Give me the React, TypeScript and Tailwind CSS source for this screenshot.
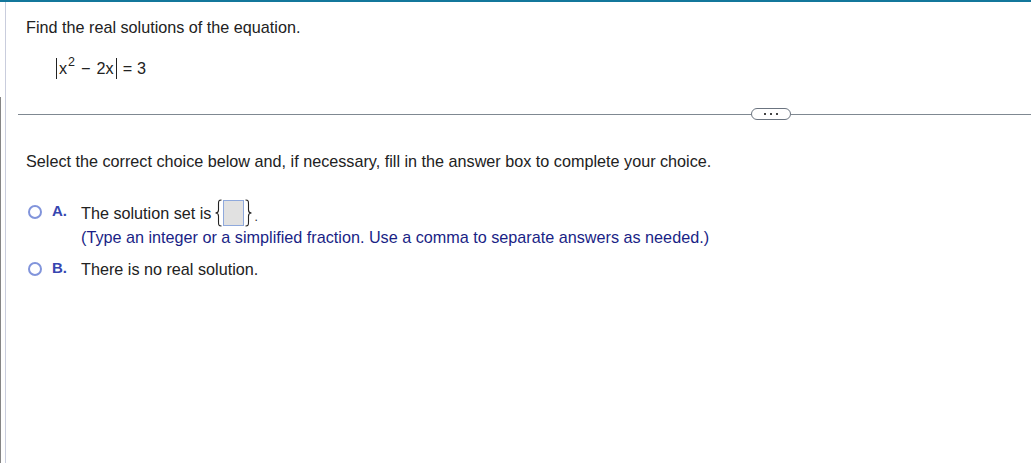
import React from 'react';

const Radio: React.FC = () => (
    <span className="block shrink-0 w-[14px] h-[14px] rounded-full border-2 border-[#8194db] bg-white"/>
);

const Brace: React.FC<{ side: 'l' | 'r' }> = ({side}) => (
    <svg width="9" height="28" viewBox="0 0 9 28" className="shrink-0">
        {side === 'l' ? (
            <path d="M7.5 1 C4.5 1 4.5 2.5 4.5 5 L4.5 11 C4.5 13 3.5 14 1.5 14 C3.5 14 4.5 15 4.5 17 L4.5 23 C4.5 25.5 4.5 27 7.5 27"
                  fill="none" stroke="#222" strokeWidth="1.1"/>
        ) : (
            <path d="M1.5 1 C4.5 1 4.5 2.5 4.5 5 L4.5 11 C4.5 13 5.5 14 7.5 14 C5.5 14 4.5 15 4.5 17 L4.5 23 C4.5 25.5 4.5 27 1.5 27"
                  fill="none" stroke="#222" strokeWidth="1.1"/>
        )}
    </svg>
);

const App: React.FC = () => {
    return (
        <div className="w-[1031px] h-[463px] bg-white flex flex-col overflow-hidden text-[#222]"
             style={{fontFamily: '"Liberation Sans", Arial, sans-serif'}}>
            <div className="h-[2px] bg-[#13779b] shrink-0"/>
            <div className="flex flex-1">
                {/* left gutter lines */}
                <div className="w-[9px] shrink-0 flex">
                    <div className="w-[1px] flex flex-col">
                        <div className="h-[95px]"/>
                        <div className="flex-1 bg-[#858585]"/>
                    </div>
                    <div className="w-[4px]"/>
                    <div className="w-[1px] bg-[#c9cddd]"/>
                </div>

                <div className="flex-1 flex flex-col">
                    <div className="pt-[16px] pl-[17px] text-[16.2px] leading-[18px]">
                        Find the real solutions of the equation.
                    </div>

                    <div className="mt-[20px] pl-[47px] h-[24px] flex items-center text-[16.2px]">
                        <span className="inline-block w-[1px] h-[21px] bg-[#222] mr-[2px]"/>
                        <span>x</span>
                        <span className="text-[12.5px] relative -top-[6px] ml-[1px]">2</span>
                        <span className="ml-[6px]">−</span>
                        <span className="ml-[6px]">2x</span>
                        <span className="inline-block w-[1px] h-[21px] bg-[#222] ml-[2px]"/>
                        <span className="ml-[6px]">=</span>
                        <span className="ml-[5px]">3</span>
                    </div>

                    <div className="mt-[28px] ml-[9px] flex items-center">
                        <div className="w-[733px] h-[1px] bg-[#7f8891]"/>
                        <button
                            className="w-[40px] h-[12px] rounded-full border border-[#6b7480] bg-white flex items-center justify-center gap-[4px] shrink-0">
                            <span className="w-[2px] h-[2px] bg-[#444]"/>
                            <span className="w-[2px] h-[2px] bg-[#444]"/>
                            <span className="w-[2px] h-[2px] bg-[#444]"/>
                        </button>
                        <div className="flex-1 h-[1px] bg-[#7f8891]"/>
                    </div>

                    <div className="mt-[32px] pl-[17px] text-[16.2px] leading-[18px]">
                        Select the correct choice below and, if necessary, fill in the answer box to complete your
                        choice.
                    </div>

                    <div className="mt-[29px] pl-[19px] flex">
                        <div className="w-[24px] pt-[6px]"><Radio/></div>
                        <div className="w-[29px] pt-[4px] text-[#3646b0] font-bold text-[15px] leading-[15px]">A.</div>
                        <div className="flex flex-col">
                            <div className="flex items-center h-[28px] text-[16.2px]">
                                <span>The solution set is</span>
                                <span className="ml-[3px]"><Brace side="l"/></span>
                                <span className="w-[21px] h-[26px] bg-[#e1e1e1] border border-[#8fa9dc]"/>
                                <Brace side="r"/>
                                <span className="ml-[1px] mt-[8px] text-[12px]">.</span>
                            </div>
                            <div className="text-[16.2px] leading-[18px] text-[#1a1f86] mt-[1px]">
                                (Type an integer or a simplified fraction. Use a comma to separate answers as needed.)
                            </div>
                        </div>
                    </div>

                    <div className="mt-[14px] pl-[19px] flex items-center">
                        <div className="w-[24px] flex"><Radio/></div>
                        <div className="w-[29px] text-[#3646b0] font-bold text-[15px] leading-[15px] -mt-[3px]">B.</div>
                        <div className="text-[16.2px] leading-[18px]">There is no real solution.</div>
                    </div>
                </div>
            </div>
        </div>
    );
};

export default App;
